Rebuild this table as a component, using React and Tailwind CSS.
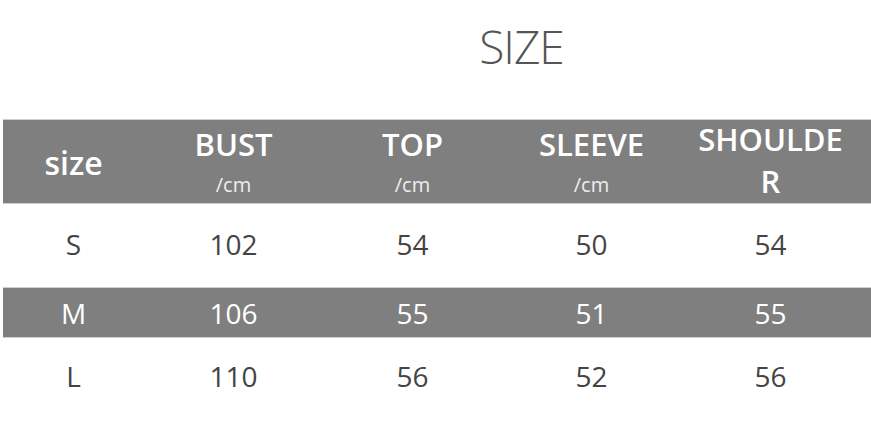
const rows = [
  { size: "S", bust: 102, top: 54, sleeve: 50, shoulder: 54, dark: false, h: "h-[83px]" },
  { size: "M", bust: 106, top: 55, sleeve: 51, shoulder: 55, dark: true, h: "h-[51px]" },
  { size: "L", bust: 110, top: 56, sleeve: 52, shoulder: 56, dark: false, h: "h-[80px]" },
];

const cols = "grid grid-cols-[141px_179px_179px_179px_179px_1fr]";

const App = () => {
  return (
    <div className="w-[871px] h-[421px] bg-white overflow-hidden" style={{ fontFamily: '"Open Sans", sans-serif' }}>
      {/* Title */}
      <div className="h-[119px] flex justify-center pl-[172px] pt-[14px]">
        <h1 className="text-[46px] font-light text-[#555] leading-[64px] tracking-[-1px]">SIZE</h1>
      </div>

      {/* Header */}
      <div className="ml-[3px] bg-[#7f7f7f] border-y border-[#cfcfcf] h-[85px] text-white overflow-hidden">
        <div className={`${cols} h-full`}>
          <div className="flex items-center justify-center pt-[2px] text-[32px] font-semibold">size</div>
          {["BUST", "TOP", "SLEEVE"].map((t) => (
            <div key={t} className="flex flex-col items-center pt-[4px]">
              <span className="text-[31px] font-semibold leading-[40px]">{t}</span>
              <span className="text-[20px] text-[#eee] leading-[30px] mt-[6px]">/cm</span>
            </div>
          ))}
          <div className="flex flex-col items-center text-[31px] font-semibold leading-[38px]">
            <span>SHOULDE</span>
            <span className="mt-[4px]">R</span>
          </div>
          <div />
        </div>
      </div>

      {/* Rows */}
      {rows.map((r) => (
        <div
          key={r.size}
          className={`ml-[3px] ${r.h} ${cols} items-center text-[28px] ${
            r.dark ? "bg-[#7f7f7f] text-white border-y border-[#cfcfcf]" : "text-[#444]"
          }`}
        >
          <div className={`text-center ${r.dark ? "" : "-mt-[4px]"}`}>{r.size}</div>
          <div className={`text-center ${r.dark ? "" : "-mt-[4px]"}`}>{r.bust}</div>
          <div className={`text-center ${r.dark ? "" : "-mt-[4px]"}`}>{r.top}</div>
          <div className={`text-center ${r.dark ? "" : "-mt-[4px]"}`}>{r.sleeve}</div>
          <div className={`text-center ${r.dark ? "" : "-mt-[4px]"}`}>{r.shoulder}</div>
          <div />
        </div>
      ))}
    </div>
  );
};

export default App;
